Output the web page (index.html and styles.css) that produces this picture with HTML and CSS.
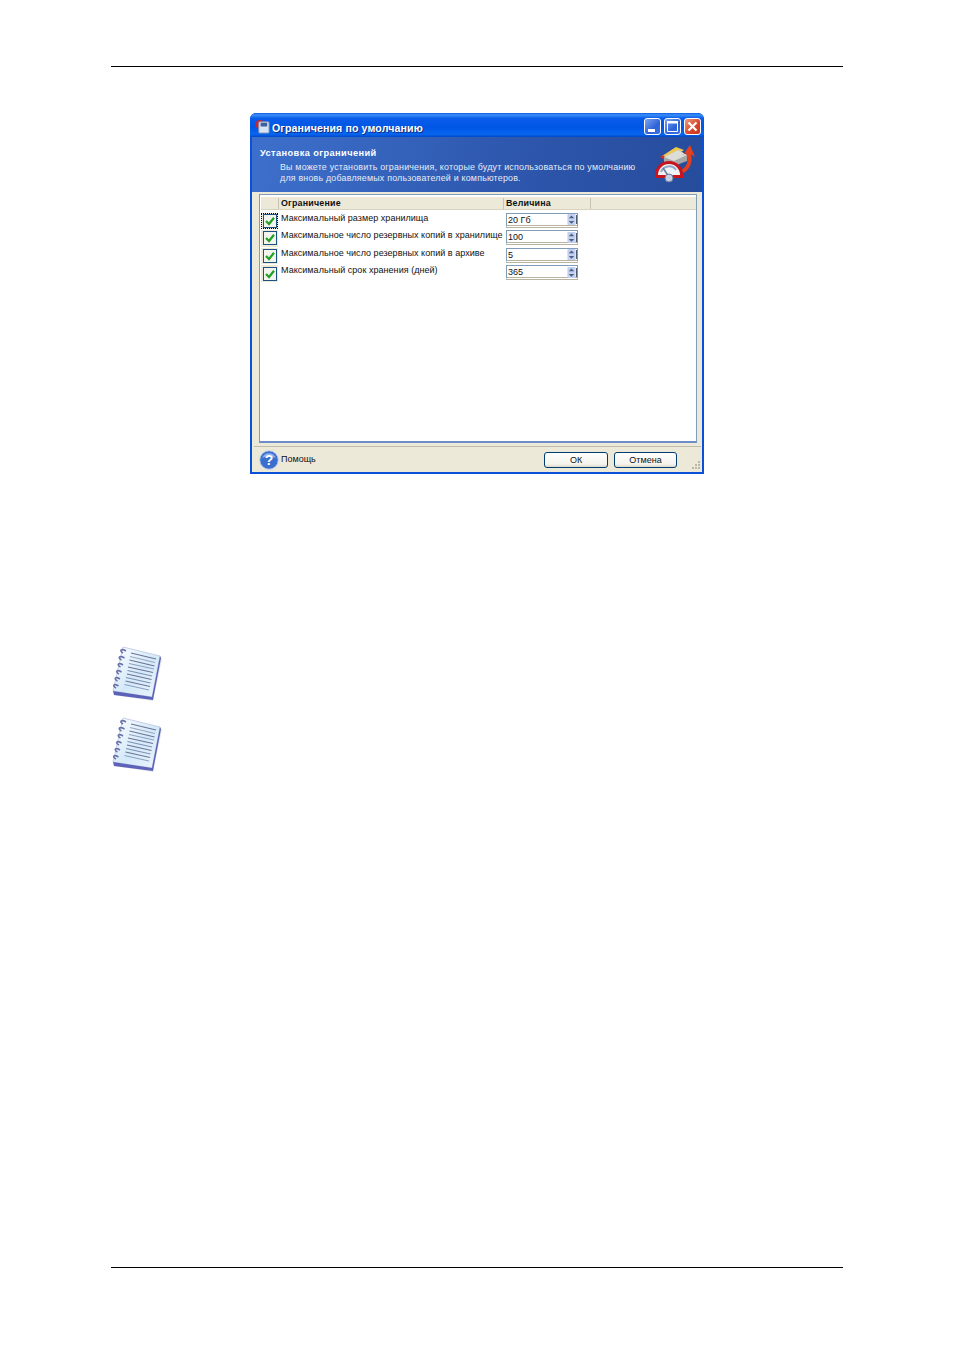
FILE: index.html
```html
<!DOCTYPE html>
<html lang="ru">
<head>
<meta charset="utf-8">
<title>Ограничения по умолчанию</title>
<link rel="stylesheet" href="styles.css">
</head>
<body>
<svg class="defs" width="0" height="0" aria-hidden="true">
  <defs>
    <linearGradient id="pageGrad" x1="0" y1="0" x2="1" y2="1">
      <stop offset="0" stop-color="#ffffff"/><stop offset="0.55" stop-color="#d3e9f9"/><stop offset="1" stop-color="#eef6fd"/>
    </linearGradient>
    <symbol id="note" viewBox="0 0 50 56">
      <path d="M2 50 L41 56 L50 14 L47 11 L40 52 L1 46 Z" fill="#d8d8e4" opacity=".7"/>
      <path d="M11 2 L48 11 L40 52 L1 46 Z" fill="url(#pageGrad)" stroke="#b9c4e2" stroke-width=".8"/>
      <path d="M1 46 L40 52 L48 11 L49 13 L41 55 L2 50 Z" fill="#5c62b8"/>
      <g stroke="#6d7396" stroke-width="1.1" fill="none">
        <path d="M19 8 L44 14"/><path d="M18 11.5 L43 17.5" stroke="#9aa6c4"/><path d="M17.500 15 L42.500 21"/><path d="M17 18.500 L42 24" stroke="#8fa0c0"/>
        <path d="M16 22 L41 27.500"/><path d="M15.500 25.500 L40 31" stroke="#7f90b4"/><path d="M15 29 L39.500 34.500"/><path d="M14 32.500 L38.500 38" stroke="#7f90b4"/>
        <path d="M13.500 36 L38 41.500"/><path d="M12.500 39.500 L37 45" stroke="#8fa0c0"/>
      </g>
      <g fill="none" stroke="#6a74a8" stroke-width="1.600">
        <path d="M14 6 C9 3 7 6 11 8"/><path d="M12.500 13 C7 10 5.500 13 9.500 15"/><path d="M11 20 C6 17 4.500 20 8.500 22"/>
        <path d="M9.500 27 C4.500 24 3 27 7 29"/><path d="M8 34 C3 31 1.500 34 5.500 36"/><path d="M6.500 41 C1.500 38 0 41 4 43"/>
      </g>
    </symbol>
    <symbol id="check" viewBox="0 0 14 14">
      <rect x=".5" y=".5" width="13" height="13" fill="#f4f4ee" stroke="#1c5180"/>
      <path d="M3 7 L6 10 L11 3.800" fill="none" stroke="#21a121" stroke-width="2.200"/>
    </symbol>
    <symbol id="spin" viewBox="0 0 9 12">
      <rect width="9" height="12" rx="1" fill="#c3d0f0"/>
      <path d="M4.500 1.500 L7.500 4.500 H1.500 Z M4.500 10.500 L1.500 7.500 H7.500 Z" fill="#4d6185"/>
    </symbol>
  </defs>
</svg>
<div class="page">
  <div class="rule"></div>
  <section class="dialog">
    <header class="titlebar">
      <svg class="title-icon" viewBox="0 0 16 16" aria-hidden="true">
        <circle cx="5.500" cy="6" r="5" fill="#c8242c"/>
        <rect x="4" y="3" width="11" height="12" rx="1" fill="#d8e4f6" stroke="#7b90b8"/>
        <rect x="6" y="4" width="7" height="4" fill="#3d5f9c"/>
      </svg>
      <span class="title-text">Ограничения по умолчанию</span>
      <div class="win-buttons">
        <span class="win-btn"><svg viewBox="0 0 15 15" aria-hidden="true"><rect x="3" y="10" width="7" height="3" fill="#fff"/></svg></span>
        <span class="win-btn"><svg viewBox="0 0 15 15" aria-hidden="true"><path d="M2.500 2.500 H12.500 V12.500 H2.500 Z" fill="none" stroke="#fff"/><rect x="2" y="2" width="11" height="2.500" fill="#fff"/></svg></span>
        <span class="win-btn close"><svg viewBox="0 0 15 15" aria-hidden="true"><path d="M3.500 3.500 L11.500 11.500 M11.500 3.500 L3.500 11.500" stroke="#fff" stroke-width="2.200"/></svg></span>
      </div>
    </header>
    <div class="banner">
      <div class="banner-text">
        <h1>Установка ограничений</h1>
        <p>Вы можете установить ограничения, которые будут использоваться по умолчанию<br>для вновь добавляемых пользователей и компьютеров.</p>
      </div>
      <svg class="banner-icon" viewBox="0 0 42 40" aria-hidden="true">
        <path d="M8 12 L22 3 L30 6 L16 16 Z" fill="#f0c84a"/>
        <path d="M6 13 L8 11 L16 15 L16 20 Z" fill="#c8342c"/>
        <path d="M10 13 L24 6 L33 11 L33 17 L20 22 L10 18 Z" fill="#a8a8a8"/>
        <path d="M10 13 L20 17 L33 11 L24 6 Z" fill="#dcdcd8"/>
        <path d="M27 26 C35 22 34 14 32 9 L29 11 L36 1 L41 13 L37 10 C39 18 36 26 29 29 Z" fill="#e2401e"/>
        <path d="M1 31 A14 14 0 0 1 29 31 L29 34 H1 Z" fill="#c8141c"/>
        <path d="M4 31 A11 11 0 0 1 26 31 Z" fill="#eef2f6"/>
        <path d="M7 28 A8.500 8.500 0 0 1 22 26" fill="none" stroke="#8fa8c8" stroke-width="2"/>
        <path d="M15 33 L9 24" stroke="#6d7a98" stroke-width="1.500"/>
        <circle cx="15" cy="34" r="4" fill="#c8cfe4" stroke="#6d7a98"/>
      </svg>
    </div>
    <div class="content">
      <div class="list">
        <div class="list-head">
          <span class="h-check"></span>
          <span class="h-name">Ограничение</span>
          <span class="h-value">Величина</span>
        </div>
        <div class="row">
          <span class="cell-check focus"><svg class="check"><use href="#check"/></svg></span>
          <span class="row-name">Максимальный размер хранилища</span>
          <span class="input"><span class="value">20 Гб</span><svg class="spin"><use href="#spin"/></svg><i class="tick"></i></span>
        </div>
        <div class="row">
          <span class="cell-check"><svg class="check"><use href="#check"/></svg></span>
          <span class="row-name">Максимальное число резервных копий в хранилище</span>
          <span class="input"><span class="value">100</span><svg class="spin"><use href="#spin"/></svg><i class="tick"></i></span>
        </div>
        <div class="row">
          <span class="cell-check"><svg class="check"><use href="#check"/></svg></span>
          <span class="row-name">Максимальное число резервных копий в архиве</span>
          <span class="input"><span class="value">5</span><svg class="spin"><use href="#spin"/></svg><i class="tick"></i></span>
        </div>
        <div class="row">
          <span class="cell-check"><svg class="check"><use href="#check"/></svg></span>
          <span class="row-name">Максимальный срок хранения (дней)</span>
          <span class="input"><span class="value">365</span><svg class="spin"><use href="#spin"/></svg><i class="tick"></i></span>
        </div>
      </div>
      <footer class="actions">
        <svg class="help-icon" viewBox="0 0 20 20" aria-hidden="true">
          <circle cx="10" cy="10" r="9.300" fill="#3a6fd0" stroke="#c4d2ec" stroke-width="1"/>
          <path d="M3 8 A7.500 7.500 0 0 1 17 8 C12 6 8 6 3 8 Z" fill="#8fb0ea"/>
          <text x="10" y="15" class="help-mark">?</text>
        </svg>
        <span class="help-text">Помощь</span>
        <span class="btn ok">ОК</span>
        <span class="btn cancel">Отмена</span>
        <svg class="grip" viewBox="0 0 11 11" aria-hidden="true">
          <path d="M8 1h2v2H8zM5 4h2v2H5zM8 4h2v2H8zM2 7h2v2H2zM5 7h2v2H5zM8 7h2v2H8z" fill="#bdb9a6"/>
        </svg>
      </footer>
    </div>
  </section>
  <div class="notes">
    <svg class="note"><use href="#note"/></svg>
    <svg class="note"><use href="#note"/></svg>
  </div>
  <div class="rule bottom"></div>
</div>
</body>
</html>
```
FILE: styles.css
```css
* { box-sizing: border-box; }
html, body { margin: 0; padding: 0; background: #fff; }
.defs { position: absolute; }
.page {
  width: 954px;
  height: 1350px;
  padding: 66px 111px 82px;
  display: flex;
  flex-direction: column;
  font-family: "Liberation Sans", Arial, sans-serif;
}
.rule { height: 1px; background: #000; flex: none; }
.rule.bottom { margin-top: auto; }

.dialog {
  width: 454px;
  height: 361px;
  margin: 46px 0 0 139px;
  background: #0a50d8;
  border-radius: 6px 6px 0 0;
  padding: 0 2px 2px;
  display: flex;
  flex-direction: column;
  flex: none;
}
.titlebar {
  height: 24px;
  margin: 0 -2px;
  padding: 2px 3px 0 5px;
  display: flex;
  align-items: center;
  border-radius: 6px 6px 0 0;
  background: linear-gradient(#0a5ae0 0, #3c90f8 8%, #0a5cea 22%, #0056e4 60%, #0866f0 88%, #0048c8 100%);
}
.title-icon { width: 15px; height: 15px; flex: none; }
.title-text {
  margin: 3px 0 0 2px;
  color: #fff;
  font-size: 10.600px;
  font-weight: 700;
  letter-spacing: .12px;
  text-shadow: 1px 1px 0 #0f2a80;
}
.win-buttons { margin-left: auto; display: flex; gap: 3px; }
.win-btn {
  width: 17px;
  height: 17px;
  border: 1px solid #fff;
  border-radius: 3px;
  background: linear-gradient(135deg, #7ea4ee, #2f62d8 60%, #3c74e4);
  display: block;
}
.win-btn.close { background: linear-gradient(135deg, #ec9d80, #d8452a 60%, #c43a20); }
.win-btn svg { display: block; width: 15px; height: 15px; }

.banner {
  height: 55px;
  padding: 10px 6px 0 8px;
  display: flex;
  justify-content: space-between;
  color: #fff;
  background: linear-gradient(100deg, #3d70cc, #2d56ac 60%, #264c9c);
}
.banner h1 { margin: 0; font-size: 9.200px; line-height: 12px; font-weight: 700; letter-spacing: .43px; }
.banner p { margin: 3px 0 0 20px; font-size: 8.900px; line-height: 10.500px; color: #e6ecf8; letter-spacing: .2px; }
.banner-icon { width: 42px; height: 40px; margin-top: -3px; flex: none; }

.content {
  flex: 1;
  background: #ece9d8;
  padding: 2px 5px 0 7px;
  display: flex;
  flex-direction: column;
}
.list {
  height: 249px;
  background: #fff;
  border: 1px solid #7f9db9;
  border-bottom: 2px solid #6d8cc8;
  padding: 2px 0 0 1px;
  font-size: 9px;
  color: #111;
}
.list-head {
  height: 13px;
  display: flex;
  align-items: center;
  background: #ece9d8;
  border-bottom: 1px solid #d8d4c0;
  font-weight: 700;
  font-size: 8.900px;
  letter-spacing: .2px;
  margin-bottom: 2.500px;
}
.h-check { width: 18px; height: 11px; border-right: 1px solid #c8c4b0; }
.h-name { width: 225px; height: 11px; line-height: 11px; padding-left: 2px; border-right: 1px solid #c8c4b0; }
.h-value { width: 87px; height: 11px; line-height: 11px; padding-left: 2px; border-right: 1px solid #c8c4b0; }
.row {
  height: 17.600px;
  display: flex;
  align-items: flex-start;
}
.cell-check {
  width: 17px;
  height: 16.500px;
  flex: none;
  background: #ece9d8;
  display: flex;
  align-items: center;
  justify-content: center;
}
.cell-check.focus { outline: 1px dotted #000; outline-offset: -1px; }
.check { width: 14px; height: 14px; display: block; }
.row-name {
  width: 228px;
  flex: none;
  padding-left: 3px;
  line-height: 11px;
  white-space: nowrap;
  letter-spacing: .04px;
}
.input {
  width: 72px;
  height: 15px;
  flex: none;
  display: flex;
  align-items: center;
  border: 1px solid #7f9db9;
  border-bottom: 3px double #b8b4a0;
  padding: 1px 0 0 1px;
  font-size: 9px;
}
.value { flex: 1; }
.spin { width: 9px; height: 11px; display: block; }
.tick { width: 1px; height: 9px; background: #4a5a70; }

.actions {
  flex: 1;
  margin: 3px -4px 0 -5px;
  border-top: 1px solid #bfbcab;
  display: flex;
  align-items: center;
  padding: 0 0 0 5px;
  font-size: 9px;
  color: #111;
}
.help-icon { width: 20px; height: 20px; flex: none; }
.help-mark { font: 700 14px "Liberation Sans", Arial, sans-serif; fill: #fff; text-anchor: middle; }
.help-text { margin: 0 0 1px 2px; }
.btn {
  width: 64px;
  height: 16px;
  border: 1px solid #003c74;
  border-radius: 3px;
  background: linear-gradient(#fff, #f4f3ec 80%, #dcd8c8);
  text-align: center;
  line-height: 14px;
  font-size: 9px;
}
.btn.ok { margin-left: auto; }
.btn.cancel { margin-left: 6px; width: 63px; }
.grip { width: 11px; height: 11px; margin: 12px 0 0 13px; flex: none; }

.notes { margin: 171px 0 0 1px; display: flex; flex-direction: column; gap: 15px; }
.note { width: 50px; height: 56px; display: block; filter: blur(.5px); }
```
